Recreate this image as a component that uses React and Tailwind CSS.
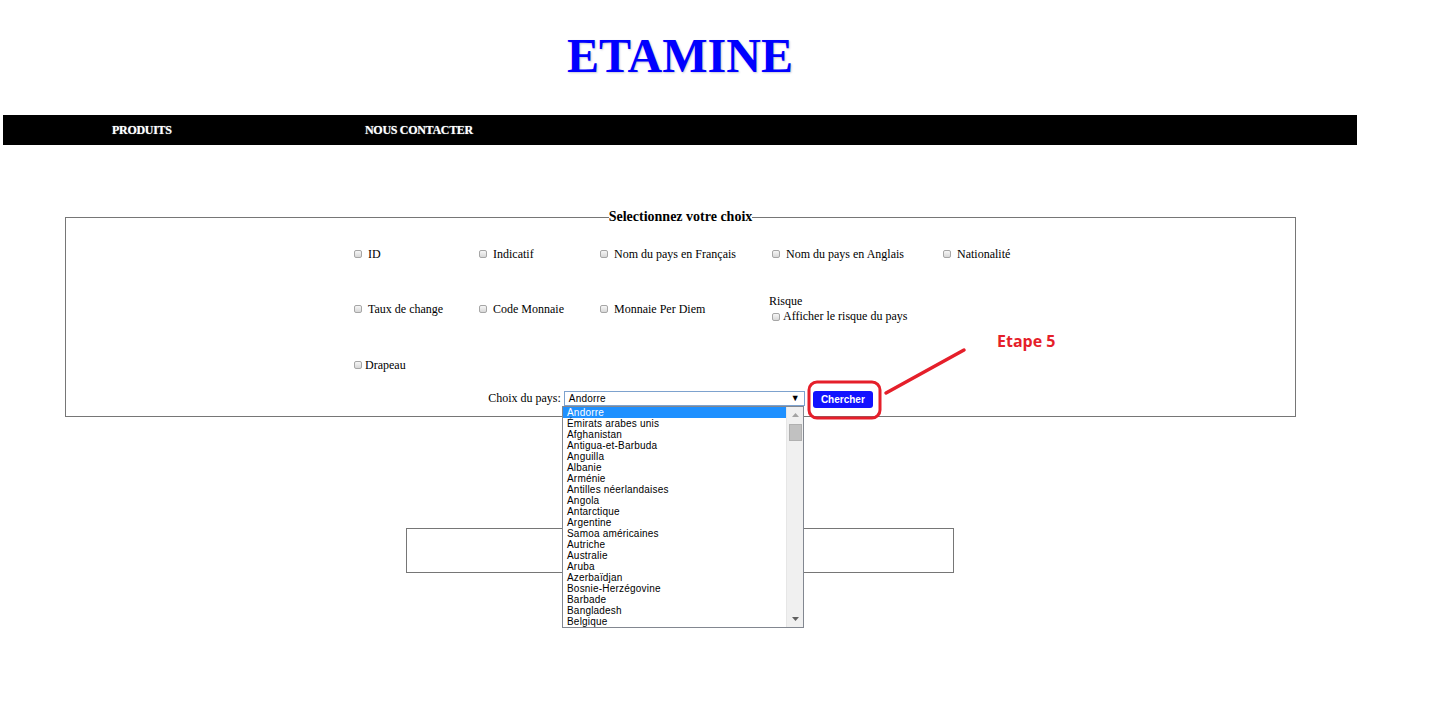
import { useState } from 'react';

const pays = [
  'Andorre', 'Émirats arabes unis', 'Afghanistan', 'Antigua-et-Barbuda', 'Anguilla',
  'Albanie', 'Arménie', 'Antilles néerlandaises', 'Angola', 'Antarctique',
  'Argentine', 'Samoa américaines', 'Autriche', 'Australie', 'Aruba',
  'Azerbaïdjan', 'Bosnie-Herzégovine', 'Barbade', 'Bangladesh', 'Belgique'
];

function Box({ tight }) {
  return (
    <input
      type="checkbox"
      readOnly
      className={`appearance-none w-[8px] h-[8px] ml-[3px] rounded-[2px] border border-[#a6a6a6] bg-gradient-to-b from-[#f6f6f6] to-[#d8d8d8] shrink-0 ${tight ? 'mr-[3px]' : 'mr-[6px]'}`}
    />
  );
}

function Choix({ label, tight }) {
  return (
    <label className="flex items-center">
      <Box tight={tight} />
      <span>{label}</span>
    </label>
  );
}

export default function App() {
  const [selected] = useState('Andorre');

  return (
    <div className="relative w-[1438px] h-[702px] bg-white overflow-hidden font-['Liberation_Serif',serif] text-black">
      <div className="ml-[3px] w-[1354px]">
        {/* Titre */}
        <div className="h-[115px] pt-[32px]">
          <h1 className="text-center text-[48px] leading-[48px] font-bold text-[#0000ff] [text-shadow:1px_1px_2px_#c8c8d8]">
            ETAMINE
          </h1>
        </div>

        {/* Menu */}
        <nav className="h-[30px] bg-black flex items-center pl-[109px] text-[12px] font-bold text-white tracking-[-0.3px] [text-shadow:0_0_1px_#9aa]">
          <span className="w-[253px]">PRODUITS</span>
          <span>NOUS CONTACTER</span>
        </nav>

        {/* Formulaire */}
        <fieldset className="mt-[64px] ml-[62px] w-[1231px] border border-[#767676] p-0 pb-[8px] text-[12px]">
          <legend className="mx-auto px-0 text-[14px] leading-[16px] font-bold">Selectionnez votre choix</legend>

          <div className="pl-[285px]">
            <div className="grid grid-cols-[125px_121px_172px_171px_120px] mt-[19px] h-[20px] items-center">
              <Choix label="ID" />
              <Choix label="Indicatif" />
              <Choix label="Nom du pays en Français" />
              <Choix label="Nom du pays en Anglais" />
              <Choix label="Nationalité" />
            </div>

            <div className="grid grid-cols-[125px_121px_172px_171px_120px] mt-[30px] h-[30px] items-center">
              <Choix label="Taux de change" />
              <Choix label="Code Monnaie" />
              <Choix label="Monnaie Per Diem" />
              <div className="flex flex-col leading-[15px]">
                <span>Risque</span>
                <Choix label="Afficher le risque du pays" tight />
              </div>
            </div>

            <div className="grid grid-cols-[125px_121px_172px_171px_120px] mt-[31px] h-[20px] items-center">
              <Choix label="Drapeau" tight />
            </div>
          </div>

          <div className="mt-[16px] h-[17px] flex justify-center items-start">
            <span className="leading-[15px] mr-[3px]">Choix du pays:</span>
            <div className="w-[241px] h-[15px] border border-[#7da2ce] flex items-center justify-between pl-[4px] pr-[4px] font-['Liberation_Sans',sans-serif] text-[10px] tracking-[0.2px]">
              <span>{selected}</span>
              <span className="text-[9px] leading-none">▼</span>
            </div>
            <button className="ml-[8px] w-[60px] h-[17px] rounded-[3px] bg-[#1212ff] text-white font-['Liberation_Sans',sans-serif] text-[10px] font-bold leading-none">
              Chercher
            </button>
          </div>
        </fieldset>

        {/* Résultat */}
        <div className="mt-[111px] mx-auto w-[548px] h-[45px] border border-[#767676]"></div>
      </div>

      {/* Liste déroulante ouverte */}
      <div className="absolute left-[562px] top-[406px] w-[242px] h-[222px] border border-[#828790] bg-white flex font-['Liberation_Sans',sans-serif] text-[10px] tracking-[0.2px] leading-[11px]">
        <ul className="flex-1">
          {pays.map((p) => (
            <li
              key={p}
              className={`h-[11px] pl-[4px] whitespace-nowrap ${p === selected ? 'bg-[#1e90ff] text-white' : 'text-black'}`}
            >
              {p}
            </li>
          ))}
        </ul>
        <div className="w-[17px] bg-[#f0f0f0] border-l border-[#e6e6e6] flex flex-col items-center">
          <svg width="9" height="16" viewBox="0 0 9 16" className="mt-[1px]">
            <path d="M1 9 L4.5 5 L8 9 Z" fill="#a3a3a3" />
          </svg>
          <div className="w-[13px] h-[17px] bg-[#c1c1c1] border border-[#b0b0b0]"></div>
          <div className="flex-1"></div>
          <svg width="9" height="16" viewBox="0 0 9 16">
            <path d="M1 6 L8 6 L4.5 10 Z" fill="#606060" />
          </svg>
        </div>
      </div>

      {/* Annotation */}
      <svg className="absolute left-0 top-0 pointer-events-none" width="1438" height="702">
        <rect x="809" y="382" width="71" height="36" rx="8" fill="none" stroke="#e51f2a" strokeWidth="3" />
        <line x1="886" y1="393" x2="964" y2="350" stroke="#e51f2a" strokeWidth="3.5" strokeLinecap="round" />
      </svg>
      <span className="absolute left-[997px] top-[331px] font-['Open_Sans',sans-serif] font-bold text-[16px] leading-[20px] text-[#e51f2a]">
        Etape 5
      </span>
    </div>
  );
}
